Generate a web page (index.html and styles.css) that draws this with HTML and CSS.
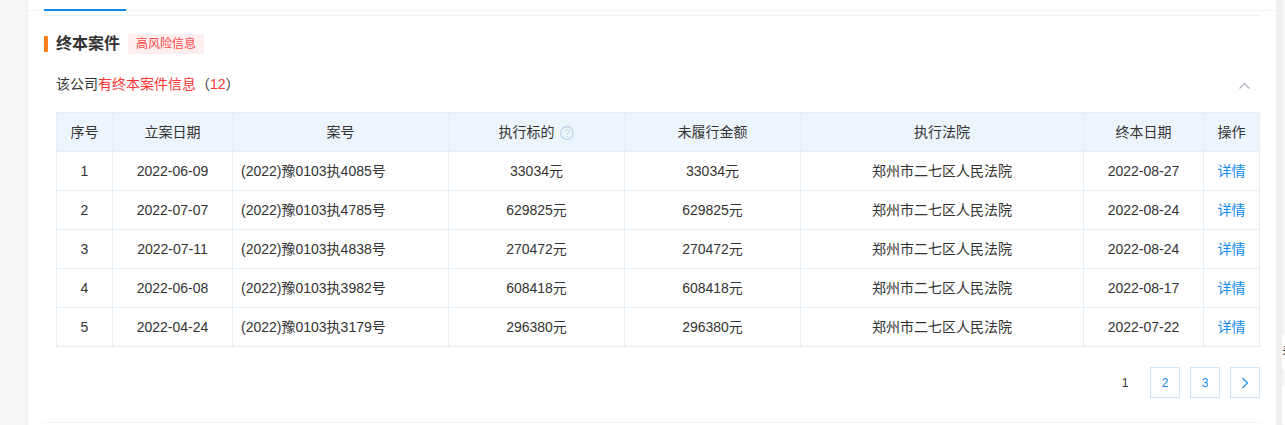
FILE: index.html
```html
<!DOCTYPE html>
<html lang="zh">
<head>
<meta charset="utf-8">
<title>终本案件</title>
<link rel="stylesheet" href="styles.css">
</head>
<body>
<main class="card">
  <div class="tabs"><span class="tab-active"></span></div>
  <section class="section">
    <h2 class="title"><span class="title-text">终本案件</span><span class="badge">高风险信息</span></h2>
    <div class="summary">
      <p class="summary-text">该公司<em>有终本案件信息</em>（<em>12</em>）</p>
      <svg class="chev-up" width="11" height="6" viewBox="0 0 11 6"><path d="M.5 5.5l5-5 5 5" fill="none" stroke="#a9b2bb" stroke-width="1.2"/></svg>
    </div>
    <table class="grid">
      <colgroup><col class="c1"><col class="c2"><col class="c3"><col class="c4"><col class="c5"><col class="c6"><col class="c7"><col class="c8"></colgroup>
      <thead>
        <tr><th>序号</th><th>立案日期</th><th>案号</th><th>执行标的 <svg class="help" width="14" height="14" viewBox="0 0 14 14"><circle cx="7" cy="7" r="6.3" fill="none" stroke="#bdd5ea" stroke-width="1.3"/><text x="7" y="10.8" text-anchor="middle" class="help-q">?</text></svg></th><th>未履行金额</th><th>执行法院</th><th>终本日期</th><th>操作</th></tr>
      </thead>
      <tbody>
        <tr><td class="plain">1</td><td class="plain">2022-06-09</td><td class="left">(2022)豫0103执4085号</td><td>33034元</td><td>33034元</td><td>郑州市二七区人民法院</td><td class="plain">2022-08-27</td><td><a class="link">详情</a></td></tr>
        <tr><td class="plain">2</td><td class="plain">2022-07-07</td><td class="left">(2022)豫0103执4785号</td><td>629825元</td><td>629825元</td><td>郑州市二七区人民法院</td><td class="plain">2022-08-24</td><td><a class="link">详情</a></td></tr>
        <tr><td class="plain">3</td><td class="plain">2022-07-11</td><td class="left">(2022)豫0103执4838号</td><td>270472元</td><td>270472元</td><td>郑州市二七区人民法院</td><td class="plain">2022-08-24</td><td><a class="link">详情</a></td></tr>
        <tr><td class="plain">4</td><td class="plain">2022-06-08</td><td class="left">(2022)豫0103执3982号</td><td>608418元</td><td>608418元</td><td>郑州市二七区人民法院</td><td class="plain">2022-08-17</td><td><a class="link">详情</a></td></tr>
        <tr><td class="plain">5</td><td class="plain">2022-04-24</td><td class="left">(2022)豫0103执3179号</td><td>296380元</td><td>296380元</td><td>郑州市二七区人民法院</td><td class="plain">2022-07-22</td><td><a class="link">详情</a></td></tr>
      </tbody>
    </table>
    <nav class="pager">
      <span class="page current">1</span>
      <a class="page">2</a>
      <a class="page">3</a>
      <a class="page"><svg width="8" height="12" viewBox="0 0 8 12"><path d="M1.5 1l5 5-5 5" fill="none" stroke="#128bed" stroke-width="1.1"/></svg></a>
    </nav>
  </section>
  <div class="end-rule"></div>
</main>
<div class="side-strip"></div>
<div class="side-box side-box-a">看</div>
<div class="side-box side-box-b"></div>
</body>
</html>
```
FILE: styles.css
```css
* { box-sizing: border-box; }
html, body { margin: 0; height: 425px; overflow: hidden; }
body {
  background: #f6f6f6;
  font-family: "Liberation Sans", "Noto Sans CJK SC", sans-serif;
  font-size: 14px;
  color: #333;
  padding-left: 27px;
  padding-right: 9px;
}
.card { background: #fff; height: 425px; padding: 0 16px; border-left: 1px solid #f0f0f0; }
.tabs { height: 11px; padding-top: 9px; border-bottom: 1px solid #f3f3f3; margin: 0 -16px; padding-left: 16px; }
.tab-active { display: block; position: relative; width: 82px; height: 2px; background: #128bed; }
.section { border-top: 1px solid #f0f0f0; margin-top: 4px; height: 407px; }
.title { display: flex; align-items: center; margin: 20px 0 0; height: 16px; border-left: 4px solid #ff7d1a; font-weight: 400; }
.title-text { margin: 0 0 4px 8px; font-size: 16px; font-weight: 700; color: #333; }
.badge { margin-left: 8px; height: 20px; line-height: 20px; padding: 0 8px; font-size: 12px; color: #fd4a4a; background: #ffeeee; border-radius: 2px; }
.summary { display: flex; justify-content: space-between; align-items: center; margin: 22px 0 0 12px; height: 20px; padding-right: 10px; }
.summary-text { margin: 0 0 2px; font-size: 14px; }
.summary-text em { font-style: normal; color: #fd3535; }
.chev-up { margin-top: 3px; }
.grid { border-collapse: collapse; table-layout: fixed; width: 1203px; margin: 18px 0 0 12px; }
.c1 { width: 56px; } .c2 { width: 120px; } .c3 { width: 216px; } .c4 { width: 176px; }
.c5 { width: 176px; } .c6 { width: 283px; } .c7 { width: 120px; } .c8 { width: 56px; }
.grid th, .grid td { border: 1px solid #e4eef6; height: 39px; padding: 0 8px 2px; text-align: center; font-weight: 400; font-size: 14px; color: #333; }
.grid th { background: #edf5fc; }
.grid td.left { text-align: left; }
.grid td.plain { padding-bottom: 0; }
.help { vertical-align: -3px; margin-left: 2px; }
.help-q { font-size: 11px; fill: #bdd5ea; }
.grid td .link { color: #128bed; }
.pager { display: flex; justify-content: flex-end; gap: 10px; margin-top: 20px; }
.page { width: 30px; height: 31px; display: flex; align-items: center; justify-content: center; border: 1px solid #d0e5f8; color: #128bed; font-size: 12px; }
.page.current { border-color: transparent; color: #333; }
.end-rule { height: 1px; background: #f3f3f3; }
.side-strip { position: absolute; top: 0; left: 1276px; width: 6px; height: 425px; background: #efefef; }
.side-box { position: absolute; left: 1282px; width: 3px; overflow: hidden; background: #fff; border-radius: 2px 0 0 2px; }
.side-box-a { top: 335px; height: 35px; padding-top: 9px; font-size: 14px; line-height: 16px; color: #333; white-space: nowrap; }
.side-box-b { top: 387px; height: 38px; }
```
